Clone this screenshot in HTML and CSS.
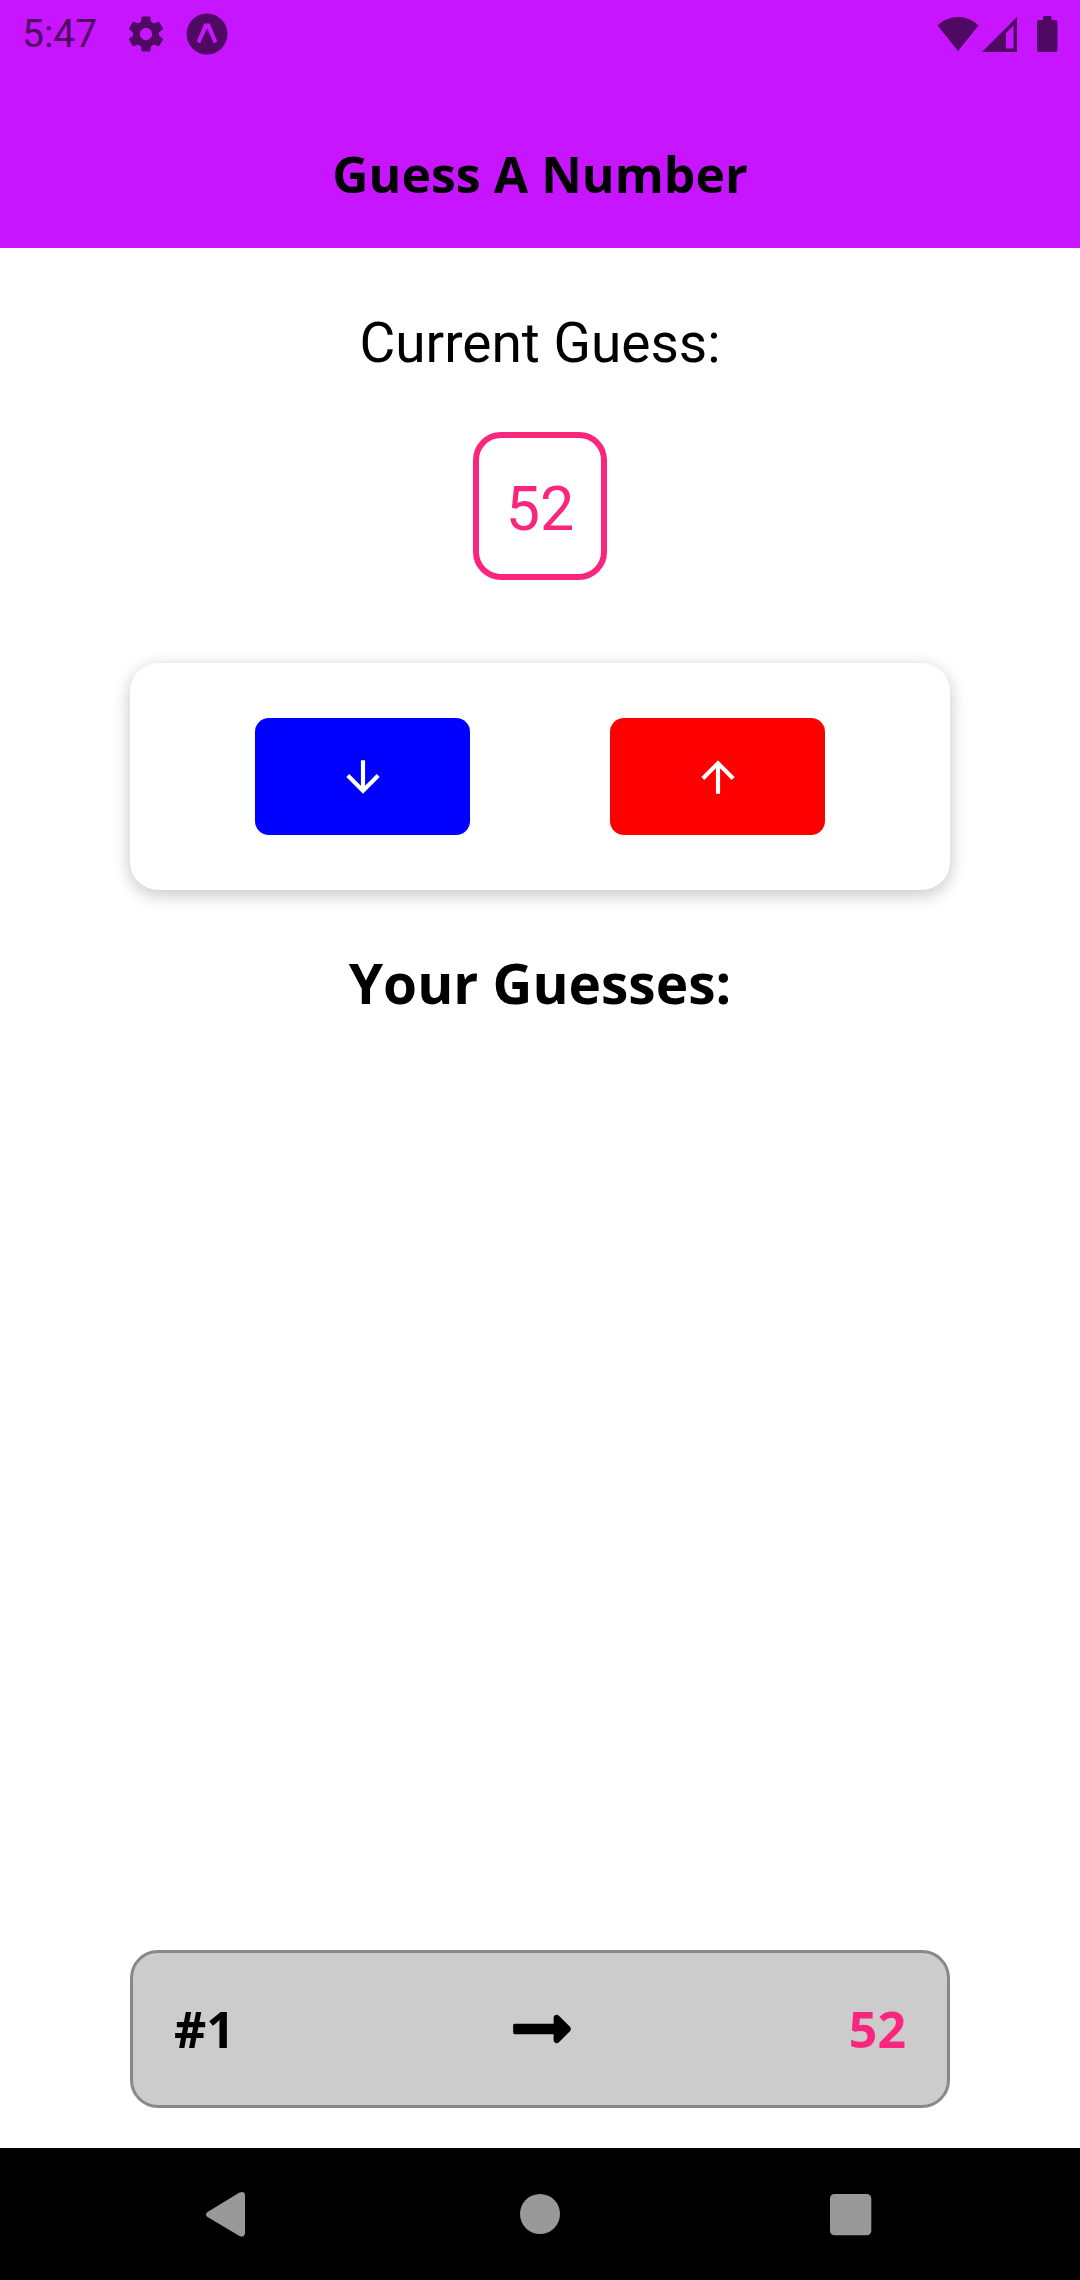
FILE: index.html
```html
<!DOCTYPE html>
<html lang="en">
<head>
  <meta charset="utf-8">
  <meta name="viewport" content="width=device-width, initial-scale=1">
  <title>Guess A Number</title>
  <link rel="stylesheet" href="styles.css">
</head>
<body>
  <div class="screen">
    <header class="header">
      <div class="status-bar">
        <div class="status-left">
          <time class="clock">5:47</time>
          <svg class="gear" viewBox="0 0 24 24" aria-hidden="true"><path d="M19.43 12.98c.04-.32.07-.64.07-.98s-.03-.66-.07-.98l2.11-1.65c.19-.15.24-.42.12-.64l-2-3.46c-.12-.22-.39-.3-.61-.22l-2.49 1c-.52-.4-1.08-.73-1.69-.98l-.38-2.65C14.46 2.18 14.25 2 14 2h-4c-.25 0-.46.18-.49.42l-.38 2.65c-.61.25-1.17.59-1.69.98l-2.49-1c-.23-.09-.49 0-.61.22l-2 3.46c-.13.22-.07.49.12.64l2.11 1.65c-.04.32-.07.65-.07.98s.03.66.07.98l-2.11 1.65c-.19.15-.24.42-.12.64l2 3.46c.12.22.39.3.61.22l2.49-1c.52.4 1.08.73 1.69.98l.38 2.65c.03.24.24.42.49.42h4c.25 0 .46-.18.49-.42l.38-2.65c.61-.25 1.17-.59 1.69-.98l2.49 1c.23.09.49 0 .61-.22l2-3.46c.12-.22.07-.49-.12-.64l-2.11-1.65zM12 15.5c-1.93 0-3.5-1.57-3.5-3.5s1.57-3.5 3.5-3.5 3.5 1.57 3.5 3.5-1.57 3.5-3.5 3.5z"/></svg>
          <svg class="expo" viewBox="0 0 42 42" aria-hidden="true"><path fill-rule="evenodd" d="M21 .5a20.500 20.500 0 1 0 0 41a20.500 20.500 0 1 0 0-41zM18.300 10.500h5.400L31.300 28.300L28 30.500L21.400 16.500h-.8L14 30.500L10.700 28.300z"/><path d="M21 15.500L27 30H15z"/></svg>
        </div>
        <div class="status-right">
          <svg class="wifi" viewBox="0 0 42 36" aria-hidden="true"><path d="M.5 9.500Q9 1 21 1T41.500 9.500L21 35z"/></svg>
          <svg class="signal" viewBox="0 0 36 36" aria-hidden="true"><path fill-rule="evenodd" d="M0 36L35 1V36zM24 17V32.500H31.500V9.500z"/></svg>
          <svg class="battery" viewBox="0 0 22 36" aria-hidden="true"><path d="M7 0h8.500v4H19.500a2 2 0 0 1 2 2V34a2 2 0 0 1-2 2H3a2 2 0 0 1-2-2V6a2 2 0 0 1 2-2H7z"/></svg>
        </div>
      </div>
      <h1 class="title">Guess A Number</h1>
    </header>

    <main class="game">
      <p class="prompt">Current Guess:</p>
      <output class="number">52</output>
      <div class="card">
        <button class="choice lower" type="button" aria-label="Lower">
          <svg class="choice-icon" viewBox="0 0 24 24" aria-hidden="true"><path d="M20 12l-1.410-1.410L13 16.170V4h-2v12.170l-5.580-5.590L4 12l8 8z"/></svg>
        </button>
        <button class="choice higher" type="button" aria-label="Higher">
          <svg class="choice-icon" viewBox="0 0 24 24" aria-hidden="true"><path d="M4 12l1.410 1.410L11 7.830V20h2V7.830l5.580 5.590L20 12l-8-8z"/></svg>
        </button>
      </div>
      <h2 class="subtitle">Your Guesses:</h2>
      <ul class="guesses">
        <li class="guess">
          <span>#1</span>
          <svg class="guess-arrow" viewBox="0 0 448 512" aria-hidden="true"><path d="M313.941 216H12c-6.627 0-12 5.373-12 12v56c0 6.627 5.373 12 12 12h301.941v46.059c0 21.382 25.851 32.090 40.971 16.971l86.059-86.059c9.373-9.373 9.373-24.569 0-33.941l-86.059-86.059c-15.119-15.119-40.971-4.411-40.971 16.971V216z"/></svg>
          <span class="guess-value">52</span>
        </li>
      </ul>
    </main>

    <nav class="nav-bar" aria-label="System">
      <button class="nav-button" type="button" aria-label="Back">
        <svg class="nav-icon" viewBox="0 0 60 60" aria-hidden="true"><path d="M9.500 28L41.500 8.500Q47 6.500 47 11.500V49.500Q46 54 41.500 52L9.500 33Q6.500 30.500 9.500 28z"/></svg>
      </button>
      <button class="nav-button" type="button" aria-label="Home">
        <svg class="nav-icon" viewBox="0 0 60 60" aria-hidden="true"><circle cx="30" cy="30" r="20"/></svg>
      </button>
      <button class="nav-button" type="button" aria-label="Overview">
        <svg class="nav-icon" viewBox="0 0 60 60" aria-hidden="true"><rect x="8" y="10" width="41.300" height="41.300" rx="4.500"/></svg>
      </button>
    </nav>
  </div>
</body>
</html>
```
FILE: styles.css
```css
* {
  box-sizing: border-box;
}

body {
  margin: 0;
  background: #fff;
  color: #000;
  font-family: "Open Sans", sans-serif;
}

button {
  margin: 0;
  padding: 0;
  border: 0;
  cursor: pointer;
}

svg {
  display: block;
  flex: none;
  fill: currentColor;
}

.screen {
  display: flex;
  flex-direction: column;
  min-height: 100vh;
}

/* Header and status bar */
.header {
  padding-bottom: 40px;
  background: #c716ff;
}

.status-bar {
  display: flex;
  align-items: center;
  justify-content: space-between;
  height: 66px;
  padding: 1px 22px 0;
  color: #500963;
}

.status-left,
.status-right {
  display: flex;
  align-items: center;
}

.clock {
  margin-right: 28px;
  font-family: Roboto, sans-serif;
  font-size: 39px;
  line-height: 46px;
}

.gear {
  width: 42px;
  height: 42px;
  margin-right: 19px;
}

.expo {
  width: 42px;
  height: 42px;
}

.wifi {
  width: 42px;
  height: 36px;
  margin-right: 3px;
}

.signal {
  width: 36px;
  height: 36px;
  margin-right: 18px;
}

.battery {
  width: 22px;
  height: 36px;
}

.title {
  margin: 74px 0 0;
  font-size: 50px;
  font-weight: 700;
  line-height: 68px;
  text-align: center;
}

/* Game */
.game {
  display: flex;
  flex: 1;
  flex-direction: column;
  align-items: center;
  padding: 63px 130px 40px;
}

.prompt {
  margin: 0;
  font-family: Roboto, sans-serif;
  font-size: 55px;
  line-height: 64px;
}

.number {
  margin-top: 57px;
  padding: 36px 27px 30px;
  border: 6px solid #fa267e;
  border-radius: 28px;
  color: #fa267e;
  font-family: Roboto, sans-serif;
  font-size: 61px;
  line-height: 70px;
}

.card {
  display: flex;
  justify-content: space-around;
  width: 100%;
  margin-top: 83px;
  padding: 55px;
  border-radius: 28px;
  background: #fff;
  box-shadow: 0 6px 18px rgba(0, 0, 0, 0.18), 0 0 16px rgba(0, 0, 0, 0.06);
}

.choice {
  display: flex;
  align-items: center;
  justify-content: center;
  width: 215px;
  height: 117px;
  border-radius: 14px;
  color: #fff;
}

.lower {
  background: #00f;
}

.higher {
  background: #f00;
}

.choice-icon {
  width: 50px;
  height: 50px;
}

.subtitle {
  margin: 55px 0 0;
  font-size: 55px;
  font-weight: 700;
  line-height: 75px;
}

.guesses {
  display: flex;
  flex: 1;
  flex-direction: column;
  justify-content: flex-end;
  width: 100%;
  margin: 0;
  padding: 0;
  list-style: none;
}

.guess {
  display: flex;
  align-items: center;
  justify-content: space-between;
  padding: 42px 41px;
  border: 3px solid #888;
  border-radius: 28px;
  background: #ccc;
  font-size: 50px;
  font-weight: 700;
  line-height: 68px;
}

.guess-arrow {
  width: 58px;
  height: 66px;
}

.guess-value {
  color: #fa267e;
}

/* System navigation */
.nav-bar {
  display: grid;
  grid-template-columns: repeat(3, 1fr);
  height: 132px;
  padding: 0 72px;
  background: #000;
}

.nav-button {
  display: flex;
  align-items: center;
  justify-content: center;
  background: transparent;
  color: #999;
}

.nav-icon {
  width: 60px;
  height: 60px;
}
```
